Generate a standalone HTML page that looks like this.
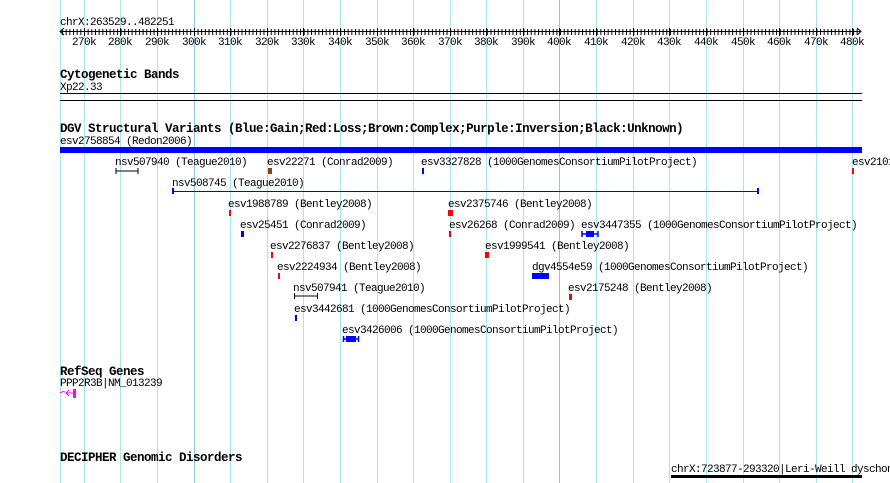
<!DOCTYPE html>
<html><head><meta charset="utf-8"><style>
html,body{margin:0;padding:0;background:#fff;width:890px;height:483px;overflow:hidden}
svg{display:block;font-family:"Liberation Mono",monospace}
.t{font-size:11px;letter-spacing:-0.6px;fill:#000}
.b{font-size:12.5px;letter-spacing:-0.5px;font-weight:bold;fill:#000}
</style></head><body>
<svg width="890" height="483" viewBox="0 0 890 483" xmlns="http://www.w3.org/2000/svg">
<defs>
<pattern id="mt" patternUnits="userSpaceOnUse" x="84" y="0" width="3.662" height="483">
<rect x="0" y="29" width="1" height="6" fill="#000"/>
</pattern>
</defs>
<g fill="#a8e6ee">
<rect x="60" y="0" width="1" height="483"/>
<rect x="84" y="0" width="1" height="483"/><rect x="120" y="0" width="1" height="483"/><rect x="157" y="0" width="1" height="483"/>
<rect x="194" y="0" width="1" height="483" fill="#90c8e8"/><rect x="230" y="0" width="1" height="483"/><rect x="267" y="0" width="1" height="483"/>
<rect x="303" y="0" width="1" height="483"/><rect x="340" y="0" width="1" height="483"/><rect x="377" y="0" width="1" height="483"/>
<rect x="413" y="0" width="1" height="483"/><rect x="450" y="0" width="1" height="483"/><rect x="486" y="0" width="1" height="483"/>
<rect x="523" y="0" width="1" height="483"/><rect x="559" y="0" width="1" height="483" fill="#90c8e8"/><rect x="596" y="0" width="1" height="483"/>
<rect x="633" y="0" width="1" height="483"/><rect x="669" y="0" width="1" height="483"/><rect x="706" y="0" width="1" height="483"/>
<rect x="743" y="0" width="1" height="483"/><rect x="779" y="0" width="1" height="483"/><rect x="816" y="0" width="1" height="483"/>
<rect x="852" y="0" width="1" height="483"/>
</g>
<text class="t" x="60" y="25">chrX:263529..482251</text>
<rect x="60" y="31" width="801" height="1" fill="#000"/>
<rect x="62" y="0" width="797" height="483" fill="url(#mt)"/>
<path d="M64 28 L60 31.5 L64 35 M857 28 L861 31.5 L857 35" stroke="#000" fill="none"/>
<g fill="#000">
<rect x="84" y="28" width="1" height="8"/><rect x="120" y="28" width="1" height="8"/><rect x="157" y="28" width="1" height="8"/><rect x="194" y="28" width="1" height="8"/><rect x="230" y="28" width="1" height="8"/><rect x="267" y="28" width="1" height="8"/><rect x="303" y="28" width="1" height="8"/><rect x="340" y="28" width="1" height="8"/><rect x="377" y="28" width="1" height="8"/><rect x="413" y="28" width="1" height="8"/><rect x="450" y="28" width="1" height="8"/><rect x="486" y="28" width="1" height="8"/><rect x="523" y="28" width="1" height="8"/><rect x="559" y="28" width="1" height="8"/><rect x="596" y="28" width="1" height="8"/><rect x="633" y="28" width="1" height="8"/><rect x="669" y="28" width="1" height="8"/><rect x="706" y="28" width="1" height="8"/><rect x="743" y="28" width="1" height="8"/><rect x="779" y="28" width="1" height="8"/><rect x="816" y="28" width="1" height="8"/><rect x="852" y="28" width="1" height="8"/>
</g>
<g text-anchor="middle">
<text class="t" x="84" y="45">270k</text><text class="t" x="120" y="45">280k</text><text class="t" x="157" y="45">290k</text><text class="t" x="194" y="45">300k</text><text class="t" x="230" y="45">310k</text><text class="t" x="267" y="45">320k</text><text class="t" x="303" y="45">330k</text><text class="t" x="340" y="45">340k</text><text class="t" x="377" y="45">350k</text><text class="t" x="413" y="45">360k</text><text class="t" x="450" y="45">370k</text><text class="t" x="486" y="45">380k</text><text class="t" x="523" y="45">390k</text><text class="t" x="559" y="45">400k</text><text class="t" x="596" y="45">410k</text><text class="t" x="633" y="45">420k</text><text class="t" x="669" y="45">430k</text><text class="t" x="706" y="45">440k</text><text class="t" x="743" y="45">450k</text><text class="t" x="779" y="45">460k</text><text class="t" x="816" y="45">470k</text><text class="t" x="852" y="45">480k</text>
</g>
<text class="b" x="60" y="78">Cytogenetic Bands</text>
<text class="t" x="60" y="90">Xp22.33</text>
<rect x="60" y="93" width="802" height="1" fill="#000"/>
<rect x="60" y="100" width="802" height="1" fill="#000"/>
<text class="b" x="60" y="132">DGV Structural Variants (Blue:Gain;Red:Loss;Brown:Complex;Purple:Inversion;Black:Unknown)</text>
<text class="t" x="60" y="144">esv2758854 (Redon2006)</text>
<rect x="60" y="147" width="802" height="6" fill="#0000ff"/>

<text class="t" x="115" y="165">nsv507940 (Teague2010)</text>
<path d="M116 168v6M116 171h22M138 168v6" stroke="#000" fill="none"/>
<text class="t" x="267" y="165">esv22271 (Conrad2009)</text>
<rect x="268" y="168" width="4" height="6" fill="#8b4513"/>
<text class="t" x="421" y="165">esv3327828 (1000GenomesConsortiumPilotProject)</text>
<rect x="422" y="168" width="2" height="6" fill="#0000ff"/>
<text class="t" x="852" y="165">esv2101</text>
<rect x="852" y="168" width="2" height="6" fill="#ff0000"/>

<text class="t" x="172" y="186">nsv508745 (Teague2010)</text>
<rect x="172" y="191" width="587" height="1" fill="#0000ff"/>
<rect x="172" y="188" width="2" height="6" fill="#0000ff"/><rect x="757" y="188" width="2" height="6" fill="#0000ff"/>

<text class="t" x="228" y="207">esv1988789 (Bentley2008)</text>
<rect x="229" y="210" width="2" height="6" fill="#ff0000"/>
<text class="t" x="448" y="207">esv2375746 (Bentley2008)</text>
<rect x="448" y="210" width="5" height="6" fill="#ff0000"/>

<text class="t" x="240" y="228">esv25451 (Conrad2009)</text>
<rect x="241" y="231" width="3" height="6" fill="#0000ff"/>
<text class="t" x="449" y="228">esv26268 (Conrad2009)</text>
<rect x="449" y="231" width="2" height="6" fill="#ff0000"/>
<text class="t" x="581" y="228">esv3447355 (1000GenomesConsortiumPilotProject)</text>
<path d="M582 231v6M582 234h16M598 231v6" stroke="#0000ff" fill="none" stroke-width="1.5"/>
<rect x="586" y="231" width="8" height="6" fill="#0000ff"/>

<text class="t" x="270" y="249">esv2276837 (Bentley2008)</text>
<rect x="271" y="252" width="2" height="6" fill="#ff0000"/>
<text class="t" x="485" y="249">esv1999541 (Bentley2008)</text>
<rect x="485" y="252" width="4" height="6" fill="#ff0000"/>

<text class="t" x="277" y="270">esv2224934 (Bentley2008)</text>
<rect x="278" y="273" width="2" height="6" fill="#ff0000"/>
<text class="t" x="532" y="270">dgv4554e59 (1000GenomesConsortiumPilotProject)</text>
<rect x="532" y="273" width="17" height="6" fill="#0000ff"/>

<text class="t" x="293" y="291">nsv507941 (Teague2010)</text>
<path d="M294.5 293v6M294.5 296h23M317.5 293v6" stroke="#000" fill="none"/>
<text class="t" x="568" y="291">esv2175248 (Bentley2008)</text>
<rect x="569" y="294" width="3" height="6" fill="#ff0000"/>

<text class="t" x="294" y="312">esv3442681 (1000GenomesConsortiumPilotProject)</text>
<rect x="295" y="315" width="2" height="6" fill="#0000ff"/>

<text class="t" x="342" y="333">esv3426006 (1000GenomesConsortiumPilotProject)</text>
<path d="M343.5 336v6M343.5 339h15M358.5 336v6" stroke="#0000ff" fill="none" stroke-width="1.5"/>
<rect x="346" y="336" width="10" height="6" fill="#0000ff"/>

<text class="b" x="60" y="375">RefSeq Genes</text>
<text class="t" x="60" y="386">PPP2R3B|NM_013239</text>
<path d="M60 393l3-1.5 2 0.5M73 393h-7M69 390l-3 3 3 3" stroke="#ff00ff" fill="none"/>
<rect x="73" y="389" width="3" height="9" fill="#ff00ff"/>

<text class="b" x="60" y="461">DECIPHER Genomic Disorders</text>
<text class="t" x="671" y="472">chrX:723877-293320|Leri-Weill dyschon</text>
<rect x="671" y="475" width="191" height="3" fill="#000"/>
</svg>
</body></html>
